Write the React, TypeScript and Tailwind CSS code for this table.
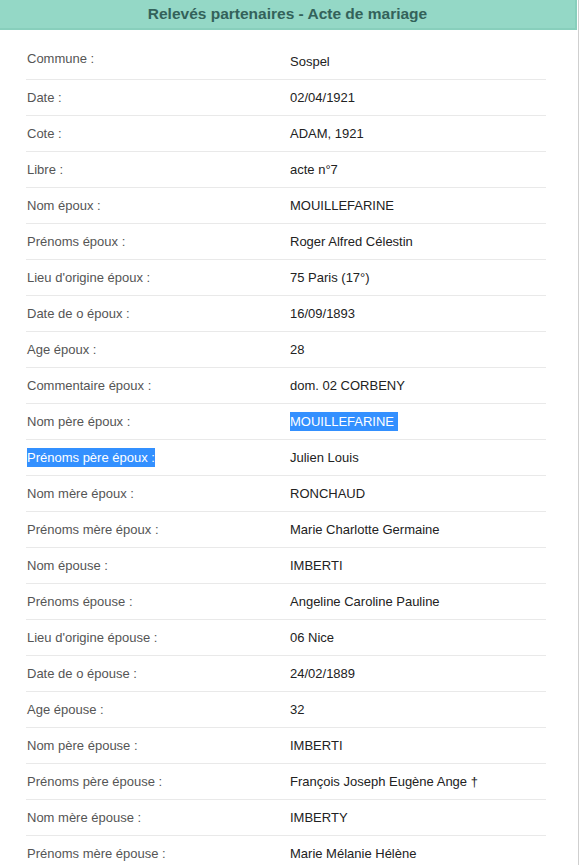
import React from "react";

const rows: [string, string][] = [
  ["Commune :", "Sospel"],
  ["Date :", "02/04/1921"],
  ["Cote :", "ADAM, 1921"],
  ["Libre :", "acte n°7"],
  ["Nom époux :", "MOUILLEFARINE"],
  ["Prénoms époux :", "Roger Alfred Célestin"],
  ["Lieu d'origine époux :", "75 Paris (17°)"],
  ["Date de o époux :", "16/09/1893"],
  ["Age époux :", "28"],
  ["Commentaire époux :", "dom. 02 CORBENY"],
  ["Nom père époux :", "MOUILLEFARINE"],
  ["Prénoms père époux :", "Julien Louis"],
  ["Nom mère époux :", "RONCHAUD"],
  ["Prénoms mère époux :", "Marie Charlotte Germaine"],
  ["Nom épouse :", "IMBERTI"],
  ["Prénoms épouse :", "Angeline Caroline Pauline"],
  ["Lieu d'origine épouse :", "06 Nice"],
  ["Date de o épouse :", "24/02/1889"],
  ["Age épouse :", "32"],
  ["Nom père épouse :", "IMBERTI"],
  ["Prénoms père épouse :", "François Joseph Eugène Ange †"],
  ["Nom mère épouse :", "IMBERTY"],
  ["Prénoms mère épouse :", "Marie Mélanie Hélène"],
];

export default function App() {
  return (
    <div
      className="w-[579px] h-[865px] overflow-hidden border-r border-[#cfcfcf] bg-white"
      style={{ fontFamily: '"Liberation Sans", Arial, sans-serif' }}
    >
      <div className="w-[577px] h-[30px] bg-[#94d8c6] border-b-2 border-r-2 border-[#88cfbc] flex items-center justify-center">
        <span className="text-[15.5px] font-bold text-[#33625a] leading-none">
          Relevés partenaires - Acte de mariage
        </span>
      </div>
      <div className="ml-[26px] pt-[14px] w-[520px]">
        {rows.map(([label, value], i) => {
          const selLabel = i === 11;
          const selValue = i === 10;
          const last = i === rows.length - 1;
          return (
            <div
              key={i}
              className={`grid grid-cols-[264px_1fr] h-[36px] ${last ? "" : "border-b border-[#e9e9e9]"}`}
            >
              <div className={`flex items-center pl-px text-[13px] text-[#555] ${i === 0 ? "pb-[6px]" : ""}`}>
                <span className={selLabel ? "bg-[#3390ff] text-white" : ""}>{label}</span>
              </div>
              <div className="flex items-center text-[13px] text-[#222]">
                <span className={selValue ? "bg-[#3390ff] text-white pr-[4px]" : ""}>{value}</span>
              </div>
            </div>
          );
        })}
      </div>
    </div>
  );
}
